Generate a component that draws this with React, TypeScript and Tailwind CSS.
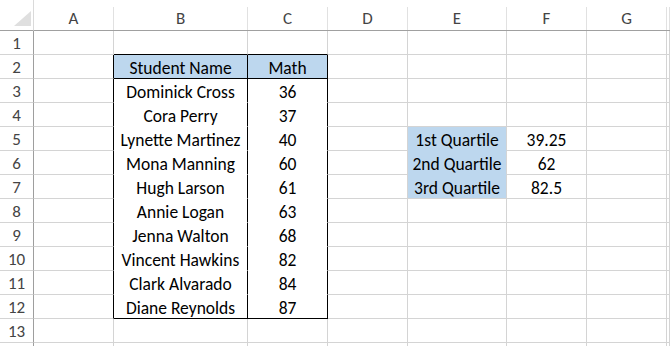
import React from 'react';

const BLUE = 'bg-[#bdd7ee]';
const COLS = ['A', 'B', 'C', 'D', 'E', 'F', 'G', ''];

const students: [string, number][] = [
  ['Dominick Cross', 36],
  ['Cora Perry', 37],
  ['Lynette Martinez', 40],
  ['Mona Manning', 60],
  ['Hugh Larson', 61],
  ['Annie Logan', 63],
  ['Jenna Walton', 68],
  ['Vincent Hawkins', 82],
  ['Clark Alvarado', 84],
  ['Diane Reynolds', 87],
];

const quartiles: Record<number, [string, string]> = {
  5: ['1st Quartile', '39.25'],
  6: ['2nd Quartile', '62'],
  7: ['3rd Quartile', '82.5'],
};

/** Text shown in a given cell (row is 1-based, col index 0 = A). */
function cellText(row: number, col: number) {
  if (row === 2 && col === 1) return 'Student Name';
  if (row === 2 && col === 2) return 'Math';
  if (row >= 3 && row <= 12) {
    const s = students[row - 3];
    if (col === 1) return s[0];
    if (col === 2) return String(s[1]);
  }
  if (quartiles[row] && col === 4) return quartiles[row][0];
  if (quartiles[row] && col === 5) return quartiles[row][1];
  return '';
}

/** Border + fill classes for a cell, mimicking Excel gridlines and the table outline. */
function cellClass(row: number, col: number) {
  const inTable = row >= 2 && row <= 12 && (col === 1 || col === 2);
  const inQuart = row >= 5 && row <= 7 && col === 4;

  let right = 'border-r-[#d4d4d4]';
  let bottom = 'border-b-[#d4d4d4]';
  let bg = 'bg-white';

  // left edge of table is the right edge of column A
  if (col === 0 && row >= 2 && row <= 12) right = 'border-r-black';
  // top edge of table is the bottom of row 1
  if (row === 1 && (col === 1 || col === 2)) bottom = 'border-b-black';

  if (inTable) {
    right = 'border-r-black';
    if (row === 2 || row === 12) bottom = 'border-b-black';
    else bottom = 'border-b-white';
    if (row === 2) bg = BLUE;
  }

  if (inQuart) {
    bg = BLUE;
    if (row < 7) bottom = 'border-b-[#bdd7ee]';
  }

  return `${bg} ${right} ${bottom}`;
}

export default function App() {
  const rows = Array.from({ length: 14 }, (_, i) => i + 1);

  return (
    <div
      className="h-[346px] w-[670px] overflow-hidden bg-white text-black"
      style={{ fontFamily: 'Carlito, Lato, "Liberation Sans", sans-serif' }}
    >
      <div className="grid grid-cols-[34px_80px_134px_80px_80px_99px_80px_80px_1fr] grid-rows-[31px_repeat(14,24px)]">
        {/* corner */}
        <div className="border-b border-r border-b-[#a0a0a0] border-r-[#dadada] bg-white">
          <svg width="33" height="30" className="block">
            <polygon points="31,11 31,26 14,26" fill="#dfdfdf" />
          </svg>
        </div>

        {/* column headers */}
        {COLS.map((c) => (
          <div key={c || 'H'} className="border-b border-b-[#a0a0a0] bg-white">
            <div className="mt-[7px] flex h-[23px] items-center justify-center border-r border-r-[#e1e1e1] pt-[1px] text-[17px] text-[#444]">
              {c}
            </div>
          </div>
        ))}

        {rows.map((r) => (
          <React.Fragment key={r}>
            <div className="flex items-center justify-center border-b border-r border-b-[#d4d4d4] border-r-[#9e9e9e] bg-white pt-[2px] text-[17px] text-[#444]">
              {r < 14 ? r : ''}
            </div>
            {COLS.map((_, ci) => (
              <div
                key={ci}
                className={`flex items-center justify-center overflow-hidden whitespace-nowrap border-b border-r pt-[3px] text-[17.5px] ${cellClass(r, ci)}`}
              >
                {cellText(r, ci)}
              </div>
            ))}
          </React.Fragment>
        ))}
      </div>
    </div>
  );
}
